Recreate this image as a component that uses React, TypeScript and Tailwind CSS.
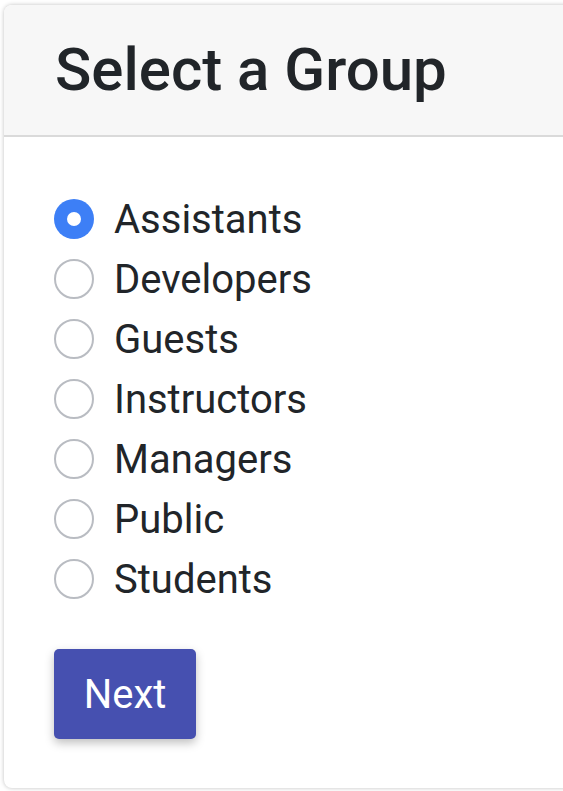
import React, { useState } from "react";

const groups = ["Assistants", "Developers", "Guests", "Instructors", "Managers", "Public", "Students"];

export default function App() {
  const [sel, setSel] = useState("Assistants");
  return (
    <div className="w-[563px] h-[791px] overflow-hidden bg-white pl-[4px] pt-[5px]" style={{ fontFamily: "Roboto, 'Liberation Sans', sans-serif" }}>
      <div className="w-[620px] h-[783px] rounded-[8px] bg-white shadow-[0_0_4px_rgba(0,0,0,0.25)] overflow-hidden flex flex-col">
        <div className="h-[132px] bg-[#f7f7f7] border-b-2 border-[#dadada] flex items-center pl-[51px]">
          <h1 className="text-[60px] font-medium text-[#212529] leading-none tracking-[0px]">Select a Group</h1>
        </div>
        <div className="pl-[50px] pt-[52px]">
          <div className="flex flex-col">
            {groups.map((g) => (
              <label key={g} className="h-[60px] flex items-center gap-[20px] cursor-pointer" onClick={() => setSel(g)}>
                {sel === g ? (
                  <span className="w-[40px] h-[40px] rounded-full bg-[#3d7ff6] flex items-center justify-center">
                    <span className="w-[14px] h-[14px] rounded-full bg-white" />
                  </span>
                ) : (
                  <span className="w-[40px] h-[40px] rounded-full border-2 border-[#b9bcc2] bg-white" />
                )}
                <span className="text-[40px] text-[#212529] leading-none pt-[2px]">{g}</span>
              </label>
            ))}
          </div>
          <button className="mt-[40px] w-[142px] h-[90px] pt-[2px] rounded-[5px] bg-[#4650b0] text-white text-[40px] leading-none shadow-[0_4px_10px_rgba(0,0,0,0.25)]">
            Next
          </button>
        </div>
      </div>
    </div>
  );
}
